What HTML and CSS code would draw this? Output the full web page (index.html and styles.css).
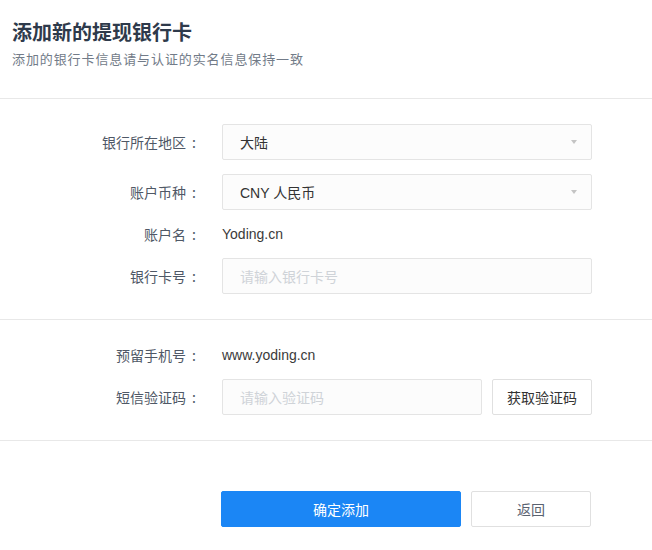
FILE: index.html
```html
<!DOCTYPE html>
<html lang="zh-CN">
<head>
  <meta charset="UTF-8">
  <meta name="viewport" content="width=device-width, initial-scale=1.0">
  <title>添加新的提现银行卡</title>
  <link rel="stylesheet" href="styles.css">
</head>
<body>
  <div class="header">
    <h1 class="title">添加新的提现银行卡</h1>
    <p class="subtitle">添加的银行卡信息请与认证的实名信息保持一致</p>
  </div>

  <form class="card-form">
    <div class="section">
      <div class="row">
        <label class="label">银行所在地区<span class="colon">:</span></label>
        <div class="select"><span>大陆</span><i class="arrow"></i></div>
      </div>
      <div class="row">
        <label class="label">账户币种<span class="colon">:</span></label>
        <div class="select"><span>CNY 人民币</span><i class="arrow"></i></div>
      </div>
      <div class="row text-row">
        <label class="label">账户名<span class="colon">:</span></label>
        <div class="value">Yoding.cn</div>
      </div>
      <div class="row">
        <label class="label">银行卡号<span class="colon">:</span></label>
        <input type="text" class="input" placeholder="请输入银行卡号">
      </div>
    </div>

    <div class="section">
      <div class="row text-row">
        <label class="label">预留手机号<span class="colon">:</span></label>
        <div class="value">www.yoding.cn</div>
      </div>
      <div class="row">
        <label class="label">短信验证码<span class="colon">:</span></label>
        <div class="code-group">
          <input type="text" class="input" placeholder="请输入验证码">
          <button type="button" class="btn code-btn">获取验证码</button>
        </div>
      </div>
    </div>

    <div class="actions">
      <button type="button" class="btn btn-primary">确定添加</button>
      <button type="button" class="btn btn-back">返回</button>
    </div>
  </form>
</body>
</html>
```

FILE: styles.css
```css
body {
  margin: 0;
  font-family: "Noto Sans CJK SC", "Liberation Sans", sans-serif;
  background: #fff;
  color: #333;
  font-size: 14px;
}
.header {
  padding: 18px 12px 0;
  height: 80px;
  border-bottom: 1px solid #e8e8e8;
}
.title {
  margin: 0;
  font-size: 20px;
  line-height: 28px;
  font-weight: bold;
  color: #2e3a4b;
}
.subtitle {
  margin: 4px 0 0;
  font-size: 13px;
  letter-spacing: 0.9px;
  line-height: 18px;
  color: #727b88;
}
.section {
  padding: 25px 0;
  border-bottom: 1px solid #e8e8e8;
  display: flex;
  flex-direction: column;
  gap: 14px;
}
.row {
  display: grid;
  grid-template-columns: 202px 370px;
  column-gap: 20px;
  align-items: center;
  height: 36px;
}
.text-row {
  height: 20px;
}
.label {
  text-align: right;
  color: #4f5866;
  line-height: 20px;
}
.colon {
  display: inline-block;
  width: 16px;
  text-align: center;
}
.value {
  color: #3a3a3a;
  font-family: "Liberation Sans", "Noto Sans CJK SC", sans-serif;
  line-height: 20px;
}
.select, .input {
  box-sizing: border-box;
  height: 36px;
  border: 1px solid #e4e4e4;
  border-radius: 2px;
  background: #fcfcfc;
  font-size: 14px;
}
.select {
  display: flex;
  align-items: center;
  justify-content: space-between;
  padding: 0 14px 0 17px;
  color: #333;
  font-family: "Liberation Sans", "Noto Sans CJK SC", sans-serif;
}
.arrow {
  width: 0;
  height: 0;
  border-left: 3px solid transparent;
  border-right: 3px solid transparent;
  border-top: 4px solid #c4c4c4;
}
.input {
  width: 100%;
  padding: 0 17px;
  font-family: "Noto Sans CJK SC", sans-serif;
  color: #333;
  outline: none;
}
.input::placeholder {
  color: #cfd3d8;
}
.code-group {
  display: flex;
  gap: 10px;
}
.code-group .input {
  width: 260px;
}
.btn {
  box-sizing: border-box;
  height: 36px;
  border: 1px solid #e0e0e0;
  border-radius: 2px;
  background: #fff;
  font-family: "Noto Sans CJK SC", sans-serif;
  font-size: 14px;
  color: #333;
  cursor: pointer;
}
.code-btn {
  width: 100px;
}
.actions {
  padding: 50px 0 0 221px;
  display: flex;
  gap: 10px;
}
.btn-primary {
  width: 240px;
  background: #1b86f5;
  border-color: #1b86f5;
  color: #fff;
}
.btn-back {
  width: 120px;
  color: #5a6270;
}
```
